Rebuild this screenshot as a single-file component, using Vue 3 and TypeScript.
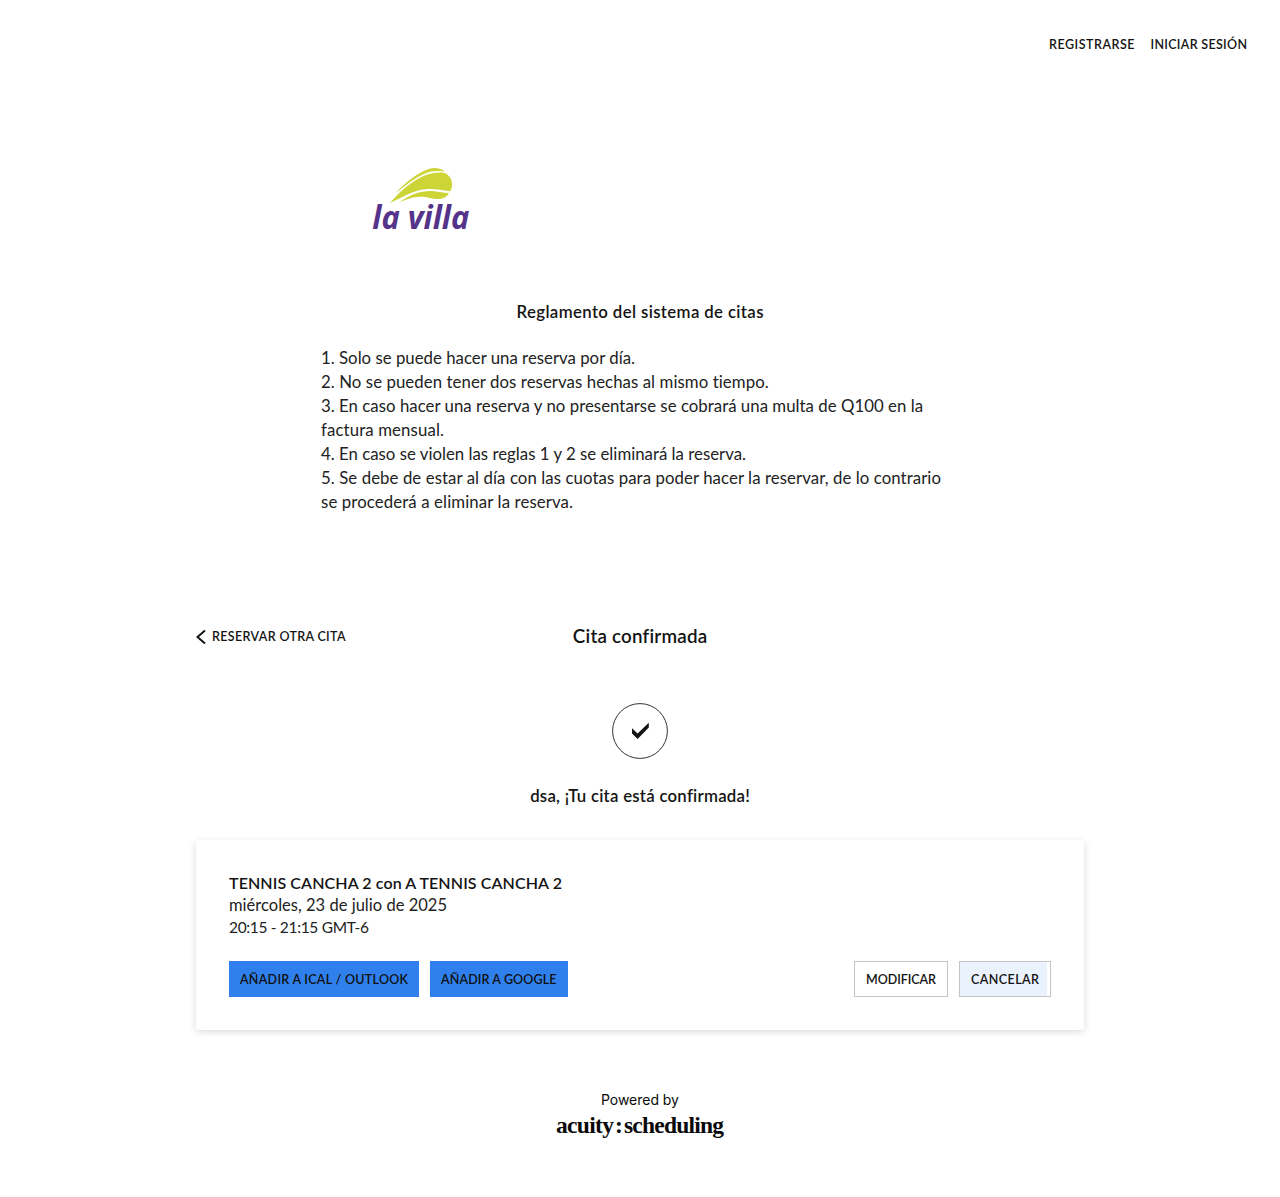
<script setup lang="ts">
import type { Directive } from 'vue'

// Tracks a line of text so that it spans the given width in pixels.
const vTrack: Directive<HTMLElement, number> = {
  mounted(el, { value }) {
    el.style.letterSpacing = '0px'
    const count = (el.textContent ?? '').trim().length
    const spacing = (value - el.getBoundingClientRect().width) / (count - 1)
    el.style.letterSpacing = `${spacing}px`
    el.style.marginRight = `${-spacing}px`
  },
}

interface Line {
  text: string
  width: number
}

const rules: Line[] = [
  { text: '1. Solo se puede hacer una reserva por día.', width: 314 },
  { text: '2. No se pueden tener dos reservas hechas al mismo tiempo.', width: 448 },
  { text: '3. En caso hacer una reserva y no presentarse se cobrará una multa de Q100 en la', width: 602 },
  { text: 'factura mensual.', width: 123 },
  { text: '4. En caso se violen las reglas 1 y 2 se eliminará la reserva.', width: 425 },
  { text: '5. Se debe de estar al día con las cuotas para poder hacer la reservar, de lo contrario', width: 620 },
  { text: 'se procederá a eliminar la reserva.', width: 252 },
]
</script>

<template>
  <div class="page">
    <nav class="account">
      <a><span v-track="85.5" class="caps">REGISTRARSE</span></a>
      <a><span v-track="96.5" class="caps">INICIAR SESIÓN</span></a>
    </nav>

    <header class="brand">
      <svg class="logo" width="120" height="85" viewBox="0 0 360 255" role="img" aria-label="la villa">
        <g fill="#cdd435">
          <path d="M107 113C145 75 192 39 223 39C238 39 247 43 254 50C232 46 210 48 187 59C155 74 130 98 107 113Z" />
          <path d="M90 144C128 99 177 61 221 54C238 51 249 52 256 55C270 62 277 77 276 90C276 99 273 106 270 109C247 106 228 101 204 102C160 104 122 130 90 144Z" />
          <path d="M119 141C151 119 179 108 211 108C230 108 248 114 267 114C260 126 249 132 235 132C216 132 203 125 181 125C158 125 139 134 119 141Z" />
        </g>
        <text x="37" y="221" textLength="291" lengthAdjust="spacingAndGlyphs">la villa</text>
      </svg>
    </header>

    <section class="rules">
      <h1><span v-track="247">Reglamento del sistema de citas</span></h1>
      <p>
        <span v-for="rule in rules" :key="rule.text" class="line"><span v-track="rule.width">{{ rule.text }}</span></span>
      </p>
    </section>

    <main class="booking">
      <div class="title-bar">
        <a class="back">
          <svg width="10" height="14" viewBox="0 0 10 14"><path d="M9 .5L1.5 7L9 13.5" /></svg>
          <span v-track="133.5" class="caps">RESERVAR OTRA CITA</span>
        </a>
        <h2><span v-track="134">Cita confirmada</span></h2>
      </div>

      <svg class="check" width="56" height="56" viewBox="0 0 56 56">
        <circle cx="28" cy="28" r="27.4" />
        <path d="M20 25.2L25.6 30.6L36.8 19.8V24.6L25.6 36L20 30.4Z" />
      </svg>
      <h3><span v-track="219.5">dsa, ¡Tu cita está confirmada!</span></h3>

      <article class="card">
        <strong><span v-track="333">TENNIS CANCHA 2 con A TENNIS CANCHA 2</span></strong>
        <div class="date"><span v-track="218">miércoles, 23 de julio de 2025</span></div>
        <div class="time"><span v-track="140">20:15 - 21:15 GMT-6</span></div>
        <div class="actions">
          <button class="primary ical"><span v-track="168" class="caps">AÑADIR A ICAL / OUTLOOK</span></button>
          <button class="primary google"><span v-track="115.5" class="caps">AÑADIR A GOOGLE</span></button>
          <button class="modify"><span v-track="70" class="caps">MODIFICAR</span></button>
          <button class="cancel"><span v-track="68" class="caps">CANCELAR</span></button>
        </div>
      </article>
    </main>

    <footer>
      <div class="powered"><span v-track="78">Powered by</span></div>
      <div class="wordmark"><span v-track="58">acuity</span><b>:</b><span v-track="100">scheduling</span></div>
    </footer>
  </div>
</template>

<style>
body {
  background: #fff;
}
</style>

<style scoped>
.page {
  box-sizing: border-box;
  height: 1197px;
  overflow: hidden;
  font: 16px/24px Lato, sans-serif;
  color: #141414;
}

.page span {
  display: inline-block;
  white-space: nowrap;
}

h1,
h2,
h3,
p {
  margin: 0;
  font-size: 16.8px;
}

h1,
h2,
h3,
strong {
  font-weight: 600;
}

.page .caps {
  font-size: 12.5px;
  font-weight: 600;
  line-height: 16px;
}

.account {
  display: flex;
  justify-content: flex-end;
  gap: 16px;
  height: 16px;
  padding: 37px 33px 0 0;
  line-height: 16px;
}

.account a {
  display: flex;
}

.brand {
  width: 640px;
  height: 85px;
  margin: 102px auto 0;
}

.logo {
  display: block;
  margin-left: 40px;
}

.logo text {
  font: italic 700 96px 'Open Sans', sans-serif;
  fill: #55338a;
}

.rules {
  width: 638px;
  margin: 60px auto 0;
}

.rules h1 {
  height: 24px;
  text-align: center;
  margin-bottom: 22px;
}

.rules p {
  color: #222;
}

.page .line {
  display: block;
  height: 24px;
}

.booking {
  width: 888px;
  margin: 110px auto 0;
}

.title-bar {
  display: grid;
  grid-template-columns: 1fr auto 1fr;
  align-items: center;
  height: 24px;
}

.back {
  display: flex;
  align-items: center;
  gap: 6px;
}

.back path {
  fill: none;
  stroke: #141414;
  stroke-width: 2;
}

.title-bar h2 {
  padding-bottom: 2px;
  font-size: 18.8px;
}

.check {
  display: block;
  margin: 54.5px auto 0;
}

.check circle {
  fill: none;
  stroke: #333;
  stroke-width: 1;
}

.check path {
  fill: #141414;
}

h3 {
  height: 24px;
  margin-top: 25.5px;
  text-align: center;
}

.card {
  box-sizing: border-box;
  height: 190px;
  margin-top: 32px;
  padding: 32px 33px 0;
  line-height: 22px;
  box-shadow: 0 2px 7px rgba(0, 0, 0, 0.14);
}

.card strong {
  display: block;
  height: 22px;
}

.date,
.time {
  height: 22px;
  color: #222;
}

.date {
  font-size: 16.5px;
}

.time {
  font-size: 15.5px;
}

.actions {
  display: flex;
  gap: 11px;
  margin-top: 23px;
}

button {
  box-sizing: border-box;
  height: 36px;
  padding: 1px 0 0 11px;
  border: 1px solid #c4c4c4;
  background: #fff;
  color: #141414;
  font-family: inherit;
  text-align: left;
}

.primary {
  border: 0;
  background: #2f80ed;
  color: #101010;
}

.ical {
  width: 190px;
}

.google {
  width: 138px;
}

.modify {
  width: 94px;
  margin-left: auto;
}

.cancel {
  width: 92px;
  background: linear-gradient(90deg, #eaf2fd 87px, #fff 87px);
}

footer {
  margin-top: 60px;
  text-align: center;
  color: #0a0a0a;
}

.powered {
  height: 20px;
  font: 14px/20px Inter, sans-serif;
}

.wordmark {
  display: flex;
  justify-content: center;
  align-items: baseline;
  font: 700 23.5px/31px 'Liberation Serif', serif;
}

.wordmark b {
  width: 10px;
  text-align: center;
}
</style>
